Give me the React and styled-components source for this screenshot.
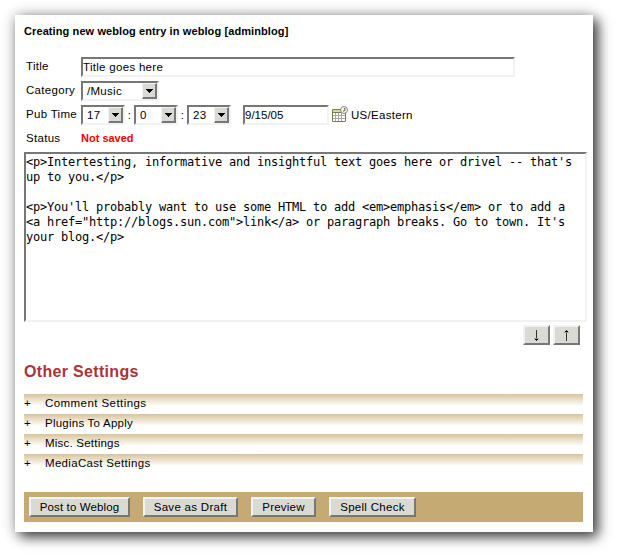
import React from "react";
import styled, { createGlobalStyle } from "styled-components";

const GlobalStyle = createGlobalStyle`
  body {
    margin: 0;
    background: #fff;
    font-family: "Liberation Sans", Arial, sans-serif;
    font-size: 11.5px;
    letter-spacing: 0.3px;
    color: #000;
  }
  *, *::before, *::after { box-sizing: border-box; }
  button, input, select { font: inherit; letter-spacing: inherit; color: inherit; }
`;

const Page = styled.div`
  height: 557px;
  padding: 15px;
  overflow: hidden;
`;

const Panel = styled.main`
  width: 578px;
  height: 517px;
  padding: 9px 0 0 9px;
  background: #fff;
  box-shadow: 5px 5px 12px rgba(0, 0, 0, 0.72), 0 0 14px rgba(0, 0, 0, 0.24);
`;

const PageTitle = styled.h1`
  margin: 0;
  height: 33px;
  line-height: 14px;
  font-size: 11px;
  letter-spacing: 0.1px;
`;

const FieldRow = styled.div`
  display: flex;
  align-items: flex-start;
  height: ${(p) => p.$height || 24}px;
`;

const Label = styled.label`
  width: 57px;
  padding-left: 2px;
  line-height: 18px;
  white-space: nowrap;
`;

const TextField = styled.input`
  width: ${(p) => p.$width}px;
  height: 20px;
  padding: 0;
  border: 2px solid;
  border-color: #777 #f2f2f2 #f2f2f2 #777;
  border-radius: 0;
  background: #fff;
  outline: none;
  letter-spacing: ${(p) => p.$spacing || "0.3px"};
`;

const SelectFrame = styled.div`
  display: flex;
  width: ${(p) => p.$width}px;
  height: 20px;
  border: 2px solid;
  border-color: #777 #f2f2f2 #f2f2f2 #777;
  background: #fff;
`;

const SelectInput = styled.select`
  flex: 1;
  min-width: 0;
  padding: 0 0 0 4px;
  border: 0;
  appearance: none;
  background: transparent;
  outline: none;
`;

const SelectArrow = styled.span`
  display: flex;
  align-items: center;
  justify-content: center;
  width: 15px;
  height: 16px;
  border: 1px solid;
  border-color: #f2f2f2 #777 #777 #f2f2f2;
  box-shadow: inset -1px -1px #777;
  background: #dadad5;
`;

const Colon = styled.span`
  width: 9px;
  text-align: center;
  line-height: 20px;
`;

const DateGroup = styled.div`
  display: flex;
  margin-left: 12px;
`;

const CalendarSvg = styled.svg`
  display: block;
  margin: 1px 3px 0;
`;

const Zone = styled.span`
  line-height: 20px;
  letter-spacing: 0.3px;
`;

const Status = styled.strong`
  color: #f00;
  font-size: 11px;
  letter-spacing: 0;
  line-height: 18px;
`;

const Editor = styled.textarea`
  display: block;
  width: 563px;
  height: 170px;
  padding: 1px 0 0;
  border: 2px solid;
  border-color: #777 #f2f2f2 #f2f2f2 #777;
  border-radius: 0;
  background: #fff;
  color: #000;
  outline: none;
  resize: none;
  overflow: hidden;
  font: 12px/15px "DejaVu Sans Mono", monospace;
  letter-spacing: -0.224px;
`;

const ArrowBar = styled.div`
  display: flex;
  justify-content: flex-end;
  gap: 3px;
  width: 556px;
  padding-top: 3px;
`;

const Button = styled.button`
  display: flex;
  align-items: center;
  justify-content: center;
  width: ${(p) => p.$width}px;
  height: 20px;
  padding: 0;
  border: 2px solid;
  border-color: #f2f2f2 #777 #777 #f2f2f2;
  border-radius: 0;
  background: #dadad5;
  white-space: nowrap;
  letter-spacing: ${(p) => p.$spacing || "0.3px"};
`;

const SectionTitle = styled.h2`
  margin: 17px 0 12px;
  line-height: 20px;
  font-size: 16px;
  letter-spacing: 0.32px;
  color: #aa3439;
`;

const SettingsList = styled.div`
  width: 559px;
  height: 98px;
`;

const SettingsRow = styled.div`
  display: flex;
  height: 20px;
  line-height: 19px;
  letter-spacing: ${(p) => p.$spacing};
  background: linear-gradient(#d8c49b, #fff) 0 0 / 100% 12px no-repeat;
`;

const Toggle = styled.span`
  width: 21px;
`;

const Actions = styled.div`
  display: flex;
  align-items: center;
  gap: 13px;
  width: 559px;
  height: 30px;
  padding-left: 5px;
  background: #c5aa73;
`;

const Dropdown = ({ value, width, label }) => (
  <SelectFrame $width={width}>
    <SelectInput defaultValue={value} aria-label={label}>
      <option>{value}</option>
    </SelectInput>
    <SelectArrow>
      <svg width="7" height="4" viewBox="0 0 7 4" shapeRendering="crispEdges">
        <path d="M0 0h7v1H6v1H5v1H4v1H3V3H2V2H1V1H0z" />
      </svg>
    </SelectArrow>
  </SelectFrame>
);

const CalendarIcon = () => (
  <CalendarSvg width="16" height="16" viewBox="0 0 16 16">
    <path d="M.5 3.5h13v12H.5z" fill="#fff" stroke="#7d7c4c" />
    <path d="M1 4h12v2H1z" fill="#d8d997" />
    <path d="M1 6.5h12" stroke="#7d7c4c" />
    <path d="M1 9.5h12M1 12.5h12M3.5 7v8M6.5 7v8M9.5 7v8" stroke="#a9a9a9" />
    <circle cx="12" cy="4" r="3.5" fill="#f5f5ee" stroke="#868670" />
    <path d="M12.8 2v2.5L11 5.2" fill="none" stroke="#555540" />
  </CalendarSvg>
);

const ArrowGlyph = ({ up }) => (
  <svg width="5" height="11" viewBox="0 0 5 11" shapeRendering="crispEdges">
    <g transform={up ? "rotate(180 2.5 5.5)" : undefined}>
      <path d="M2 0h1v11H2z" fill="#333" />
      <path d="M0 8h5v1H0z" fill="#999" />
      <path d="M1 9h3v1H1z" />
    </g>
  </svg>
);

const entry = `<p>Intertesting, informative and insightful text goes here or drivel -- that's
up to you.</p>

<p>You'll probably want to use some HTML to add <em>emphasis</em> or to add a
<a href="http://blogs.sun.com">link</a> or paragraph breaks. Go to town. It's
your blog.</p>`;

const settings = [
  ["Comment Settings", "0.43px"],
  ["Plugins To Apply", "0.24px"],
  ["Misc. Settings", "0.22px"],
  ["MediaCast Settings", "0.32px"],
];

const actions = [
  ["Post to Weblog", 101, "0.12px"],
  ["Save as Draft", 95, "0.3px"],
  ["Preview", 65, "0.2px"],
  ["Spell Check", 87, "0.3px"],
];

export default function App() {
  return (
    <Page>
      <GlobalStyle />
      <Panel>
        <PageTitle>Creating new weblog entry in weblog [adminblog]</PageTitle>
        <FieldRow>
          <Label>Title</Label>
          <TextField $width={434} defaultValue="Title goes here" />
        </FieldRow>
        <FieldRow>
          <Label>Category</Label>
          <Dropdown value="/Music" width={78} label="Category" />
        </FieldRow>
        <FieldRow>
          <Label>Pub Time</Label>
          <Dropdown value="17" width={44} label="Hour" />
          <Colon>:</Colon>
          <Dropdown value="0" width={44} label="Minute" />
          <Colon>:</Colon>
          <Dropdown value="23" width={44} label="Second" />
          <DateGroup>
            <TextField $width={86} $spacing="0px" defaultValue="9/15/05" />
            <CalendarIcon />
            <Zone>US/Eastern</Zone>
          </DateGroup>
        </FieldRow>
        <FieldRow $height={23}>
          <Label>Status</Label>
          <Status>Not saved</Status>
        </FieldRow>
        <Editor defaultValue={entry} spellCheck={false} />
        <ArrowBar>
          <Button $width={27} aria-label="Move down"><ArrowGlyph /></Button>
          <Button $width={27} aria-label="Move up"><ArrowGlyph up /></Button>
        </ArrowBar>
        <SectionTitle>Other Settings</SectionTitle>
        <SettingsList>
          {settings.map(([name, spacing]) => (
            <SettingsRow key={name} $spacing={spacing}>
              <Toggle>+</Toggle>
              {name}
            </SettingsRow>
          ))}
        </SettingsList>
        <Actions>
          {actions.map(([name, width, spacing]) => (
            <Button key={name} $width={width} $spacing={spacing}>{name}</Button>
          ))}
        </Actions>
      </Panel>
    </Page>
  );
}
